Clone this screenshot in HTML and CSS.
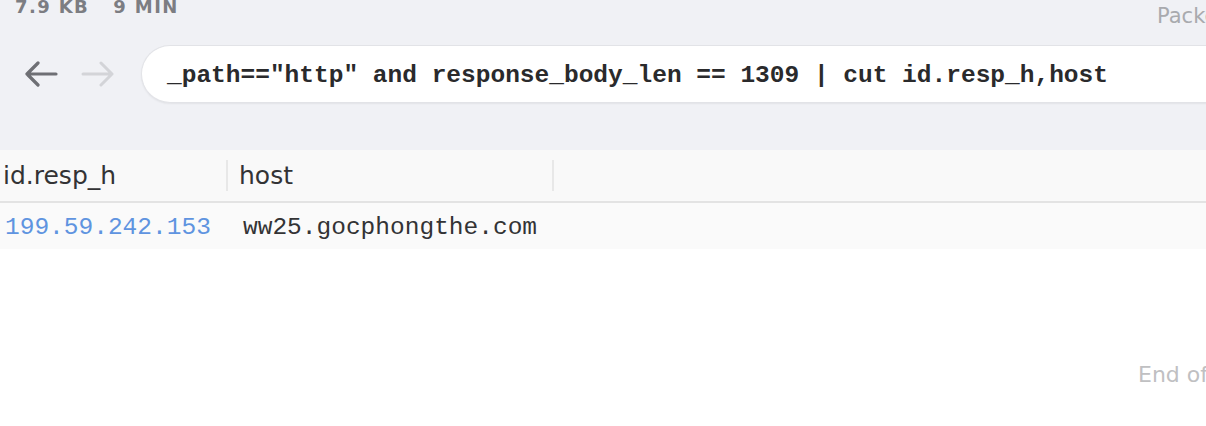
FILE: index.html
```html
<!DOCTYPE html>
<html>
<head>
<meta charset="utf-8">
<link rel="stylesheet" href="styles.css">
</head>
<body>
<div class="app">
  <div class="top">
    <div class="topbar">
      <div class="stats"><span>7.9 KB</span><span>9 MIN</span></div>
      <div class="packets">Packets</div>
    </div>
    <div class="searchrow">
      <div class="nav">
        <svg class="arrow back" width="34" height="26" viewBox="0 0 34 26"><path d="M32 13H3M14 2L3 13l11 11" fill="none" stroke="currentColor" stroke-width="3.2" stroke-linecap="round" stroke-linejoin="round"/></svg>
        <svg class="arrow fwd" width="34" height="26" viewBox="0 0 34 26"><path d="M2 13h29M20 2l11 11-11 11" fill="none" stroke="currentColor" stroke-width="3" stroke-linecap="round" stroke-linejoin="round"/></svg>
      </div>
      <div class="search">_path=="http" and response_body_len == 1309 | cut id.resp_h,host</div>
    </div>
  </div>
  <div class="table">
    <div class="thead">
      <div class="th c1">id.resp_h</div>
      <div class="th c2">host</div>
      <div class="th c3"></div>
    </div>
    <div class="tr">
      <div class="td c1 ip">199.59.242.153</div>
      <div class="td c2">ww25.gocphongthe.com</div>
      <div class="td c3"></div>
    </div>
  </div>
  <div class="end">End of results</div>
</div>
</body>
</html>
```
FILE: styles.css
```css
html, body {
  margin: 0;
  padding: 0;
  background: #ffffff;
}
.app {
  width: 1206px;
  height: 426px;
  overflow: hidden;
  font-family: "DejaVu Sans", sans-serif;
}
.top {
  background: #f0f1f5;
  height: 150px;
}
.topbar {
  display: flex;
  justify-content: space-between;
  height: 30px;
}
.stats {
  display: flex;
  gap: 24px;
  margin-top: -2px;
  padding-left: 15px;
  font-size: 18px;
  line-height: 18px;
  height: 18px;
  font-weight: bold;
  letter-spacing: 1.4px;
  color: #7c7d82;
}
.packets {
  margin-top: 6px;
  font-size: 21px;
  line-height: 21px;
  height: 21px;
  color: #a9aaae;
  width: 49px;
  white-space: nowrap;
  overflow: hidden;
}
.searchrow {
  display: flex;
  align-items: center;
  margin-top: 15px;
  height: 58px;
}
.nav {
  display: flex;
  align-items: center;
  gap: 23px;
  width: 141px;
  padding-left: 24px;
  box-sizing: border-box;
}
.arrow.back { color: #6e6f74; }
.arrow.fwd { color: #d3d4d8; }
.search {
  flex: 1;
  height: 58px;
  box-sizing: border-box;
  background: #ffffff;
  border: 1px solid #e2e3e7;
  border-right: none;
  border-radius: 29px 0 0 29px;
  box-shadow: 0 1px 2px rgba(0,0,0,0.06);
  display: flex;
  align-items: center;
  padding-left: 25px;
  padding-top: 3px;
  font-family: "Liberation Mono", monospace;
  font-weight: bold;
  font-size: 24.5px;
  color: #2a2a2c;
  white-space: pre;
  overflow: hidden;
  margin-right: -30px;
}
.table {
  display: flex;
  flex-direction: column;
}
.thead {
  display: flex;
  height: 53px;
  box-sizing: border-box;
  background: #f9f9f9;
  border-bottom: 2px solid #e3e3e3;
  align-items: center;
}
.th {
  font-size: 25px;
  color: #333335;
  height: 31px;
  line-height: 31px;
  box-sizing: border-box;
}
.th.c1 {
  width: 228px;
  padding-left: 3px;
  border-right: 2px solid #e8e8e8;
}
.th.c2 {
  width: 326px;
  padding-left: 11px;
  border-right: 2px solid #e8e8e8;
}
.th.c3 { flex: 1; }
.tr {
  display: flex;
  height: 46px;
  align-items: center;
  background: #fafafa;
}
.td {
  font-family: "Liberation Mono", monospace;
  font-size: 24.5px;
  padding-top: 3px;
  color: #333335;
  white-space: nowrap;
  box-sizing: border-box;
}
.td.c1 {
  width: 228px;
  padding-left: 5px;
}
.td.c2 {
  width: 326px;
  padding-left: 15px;
}
.td.c3 { flex: 1; }
.td.ip { color: #5f94e0; }
.end {
  margin-top: 113px;
  padding-left: 1138px;
  font-size: 22px;
  color: #c0c0c2;
  white-space: nowrap;
}
```
